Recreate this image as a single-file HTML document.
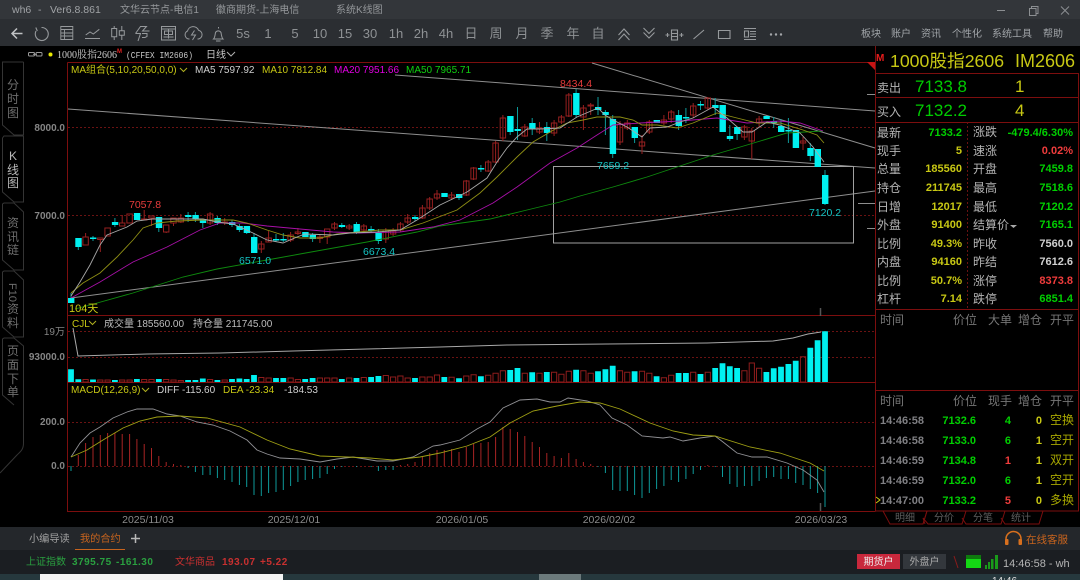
<!DOCTYPE html>
<html><head><meta charset="utf-8"><style>
html,body{margin:0;padding:0;background:#000;width:1080px;height:580px;overflow:hidden}
svg{display:block}
text{font-family:"Liberation Sans","Noto Sans CJK SC",sans-serif}
.l{font-size:12px;fill:#b4b4b4}
.v{font-size:11px;font-weight:bold;text-anchor:end}
.g{fill:#00d000}.y{fill:#c8c814}.w{fill:#d0d0d0}.r{fill:#f03c3c}
.h{font-size:12px;fill:#767676}
.t{font-size:11px;font-weight:bold;fill:#808084}
.o{font-size:12px;fill:#a8a800}
.a{font-size:10px;font-weight:bold;fill:#858585;text-anchor:end}
.d{font-size:10.5px;fill:#8c8c8c;text-anchor:middle}
.tb{font-size:13px;fill:#8e9194;text-anchor:middle}
.mn{font-size:10px;fill:#a0a4a8;text-anchor:middle}
.side{font-size:12px;fill:#6e6e6e;text-anchor:middle}
.n{font-size:10px}
.ab{font-size:10.5px}
.st{font-size:10px;font-weight:bold;letter-spacing:.5px}
</style></head><body>
<svg width="1080" height="580" viewBox="0 0 1080 580" xmlns="http://www.w3.org/2000/svg">
<rect width="1080" height="580" fill="#000"/>
<!-- title + toolbar -->
<rect width="1080" height="19" fill="#33363a"/>
<rect y="19" width="1080" height="27" fill="#2b2e32"/>
<text x="12" y="13" font-size="10.5" fill="#a0a3a6">wh6</text><text x="38" y="13" font-size="10.5" fill="#a0a3a6">-</text><text x="50" y="13" font-size="10.5" fill="#a0a3a6">Ver6.8.861</text>
<text x="120" y="13" font-size="10" fill="#95989b">文华云节点-电信1</text>
<text x="216" y="13" font-size="10" fill="#95989b">徽商期货-上海电信</text>
<text x="336" y="13" font-size="10" fill="#95989b">系统K线图</text>
<g stroke="#8c8f92" fill="none" stroke-width="1">
<path d="M997 10.5h8"/>
<path d="M1029.5 8.5h6.5v7h-6.5z M1031.5 8.5v-2h6.5v7h-2"/>
<path d="M1061 6.5l8 8M1069 6.5l-8 8"/>
</g>
<!-- toolbar icons -->
<g stroke="#96999c" fill="none" stroke-width="1">
<path d="M22.500 33.500H12M17 28.500l-5 5 5 5" stroke-width="1.500" stroke="#c0c2c4"/>
<path d="M41.500 27.500A6.500 6.500 0 1 1 36 31M35.800 27.500l1.500 3.500" stroke-width="1.100"/>
<path d="M60.800 26.500h12v13h-12zM60.800 29.500h12M64.500 29.500v10M60.800 33h12M60.800 36h12" stroke-width=".9"/>
<path d="M85 38.500h15M85.700 35l4.300-3 3.300 2 6-4.700"/>
<path d="M114.200 26v2.500M114.200 36.700v3.300M111.700 28.500h5v8.200h-5zM121.800 26v4.700M121.800 35.300v4.700M119.300 30.700h5v4.600h-5z"/>
<path d="M135.500 33.500l5-7h6l-4 4.500h7M135.500 33.500h5l-2.500 7.500M142 33.500h5v3l-2 1h-3" />
<path d="M161.500 26.500h14v13.500h-14zM161.500 29h14M164.500 31h8v3.500h-8zM168.500 29v9.500M163.500 37h10"/>
<path d="M189.500 39h-.5a4.200 4.200 0 0 1-1.500-8a5.800 5.800 0 0 1 11-.800a4.500 4.500 0 0 1 0 8.800h-1M194.500 30.500l-3 4.500h4l-3 5"/>
<path d="M213.500 39c1.500-1.500 1.500-4 2-6.500a3.200 3.200 0 0 1 5.500 0c.5 2.500.5 5 2 6.500zM216 41h4.500M218.500 27v1.500"/>
</g>
<text x="243" y="38" class="tb">5s</text><text x="268" y="38" class="tb">1</text><text x="295" y="38" class="tb">5</text><text x="320" y="38" class="tb">10</text><text x="345" y="38" class="tb">15</text><text x="370" y="38" class="tb">30</text><text x="396" y="38" class="tb">1h</text><text x="421" y="38" class="tb">2h</text><text x="446" y="38" class="tb">4h</text>
<text x="471" y="38" class="tb">日</text><text x="496" y="38" class="tb">周</text><text x="522" y="38" class="tb">月</text><text x="547" y="38" class="tb">季</text><text x="573" y="38" class="tb">年</text><text x="598" y="38" class="tb">自</text>
<g stroke="#96999c" fill="none" stroke-width="1.100">
<path d="M618.500 35l5.500-6 5.500 6M618.500 40l5.500-6 5.500 6"/>
<path d="M643.500 28l5.500 5.500 5.500-5.500M643.500 32.500l5.500 5.500 5.500-5.500"/>
<path d="M671.500 30h6v10h-6zM671.500 33.500h6M671.500 36.500h6M665.500 35h4M667.500 33v4M679.500 35h4M681.500 33v4"/>
<path d="M693.500 39l10.500-9"/>
<path d="M718.500 30.500h11.500v8h-11.500z"/>
<path d="M744 28.500h12M744 39.500h12M750 31.500h6M750 34h6M750 36.500h6M744.500 31h4v6h-4z"/>
</g>
<g fill="#a4a7aa"><circle cx="771" cy="34.500" r="1.200"/><circle cx="776" cy="34.500" r="1.200"/><circle cx="781" cy="34.500" r="1.200"/></g>
<text x="871" y="37" class="mn">板块</text><text x="901" y="37" class="mn">账户</text><text x="931" y="37" class="mn">资讯</text><text x="967" y="37" class="mn">个性化</text><text x="1012" y="37" class="mn">系统工具</text><text x="1053" y="37" class="mn">帮助</text>
<!-- second row -->
<g stroke="#9a9a9a" fill="none" stroke-width="1"><rect x="28.500" y="52.500" width="6" height="3.500" rx="1"/><rect x="36" y="52.500" width="6" height="3.500" rx="1"/><path d="M33 54.300h4"/></g>
<circle cx="50.500" cy="54.500" r="2" fill="#e8e800"/>
<text x="57" y="58" font-size="10" fill="#cfcfcf" style='font-family:"Liberation Serif","Noto Serif CJK SC",serif'>1000股指2606</text>
<text x="117" y="53" font-size="6" font-weight="bold" fill="#e02020">M</text>
<text x="126" y="58" font-size="9" fill="#c8c8c8" style='font-family:"Liberation Mono",monospace' textLength="67" lengthAdjust="spacingAndGlyphs">(CFFEX IM2606)</text>
<text x="206" y="58" font-size="10" fill="#c8c8c8">日线</text>
<path d="M227 52l4 4 4-4" stroke="#b0b0b0" fill="none"/>
<!-- frame -->
<g stroke="#7c0e0e" fill="none" stroke-width="1">
<path d="M67.500 62.500H875.500M875.500 46V511M67.500 62.500V511.500H875.500M68 315.500H875.500M68 382.500H875.500"/>
</g>
<g stroke="#6a1212" stroke-width="1" stroke-dasharray="2 2">
<path d="M68 127.500H875M68 215.500H875M68 331.500H875M68 357.500H875M68 422.500H875M68 466.500H875"/>
</g>
<path d="M867 62h8v8z" fill="#c81414"/>
<!-- side tabs -->
<g stroke="#343434" fill="none" stroke-width="1">
<path d="M23.500 62H2.500V125L14 135H23.500V62"/>
<path d="M23.500 136H4L2.500 138V192L14 202H23.500V136"/>
<path d="M14 203H4L2.500 204V260L14 270L23.500 270V212z"/>
<path d="M14 271H4L2.500 272V327L14 337H23.500V280z"/>
<path d="M14 338H4L2.500 339V395L14 405M14 338L23.500 346V443C23.500 450 20 452 17 455L0 473"/>
</g>
<text x="13" y="89" class="side">分</text><text x="13" y="103" class="side">时</text><text x="13" y="117" class="side">图</text>
<text x="13" y="160" class="side" style="fill:#b8b8b8">K</text><text x="13" y="174" class="side" style="fill:#b8b8b8">线</text><text x="13" y="187" class="side" style="fill:#b8b8b8">图</text>
<text x="13" y="227" class="side">资</text><text x="13" y="241" class="side">讯</text><text x="13" y="254" class="side">链</text>
<text transform="translate(9 283) rotate(90)" font-size="11" fill="#6e6e6e">F10</text><text x="13" y="313" class="side">资</text><text x="13" y="327" class="side">料</text>
<text x="13" y="355" class="side">页</text><text x="13" y="369" class="side">面</text><text x="13" y="383" class="side">下</text><text x="13" y="396" class="side">单</text>
<!-- axis labels -->
<text x="65" y="131" class="a">8000.0</text><text x="65" y="219" class="a">7000.0</text><text x="65" y="335" class="a" style="font-weight:normal">19万</text><text x="65" y="360" class="a">93000.0</text><text x="65" y="425" class="a">200.0</text><text x="65" y="469" class="a">0.0</text>
<!-- legends -->
<text x="71" y="73" class="n" fill="#c8c814">MA组合(5,10,20,50,0,0)</text><path d="M180 68l3.500 3.500 3.500-3.500" stroke="#b0b020" fill="none"/>
<text x="195" y="73" class="n" fill="#cfcfcf">MA5 7597.92</text>
<text x="262" y="73" class="n" fill="#c8c814">MA10 7812.84</text>
<text x="334" y="73" class="n" fill="#e000e0">MA20 7951.66</text>
<text x="406" y="73" class="n" fill="#10d010">MA50 7965.71</text>
<text x="72" y="327" class="n" fill="#c8c814">CJL</text><path d="M89 321l3.500 3.500 3.500-3.500" stroke="#b0b020" fill="none"/>
<text x="104" y="327" class="n" fill="#bdbdbd">成交量 185560.00</text><text x="193" y="327" class="n" fill="#bdbdbd">持仓量 211745.00</text>
<text x="71" y="393" class="n" fill="#c8c814">MACD(12,26,9)</text><path d="M142 388l3.500 3.500 3.500-3.500" stroke="#b0b020" fill="none"/>
<text x="157" y="393" class="n" fill="#cfcfcf">DIFF -115.60</text><text x="223" y="393" class="n" fill="#c8c814">DEA -23.34</text><text x="284" y="393" class="n" fill="#cfcfcf">-184.53</text>
<!-- trend lines -->
<g stroke="#8e8e8e" fill="none" stroke-width="1">
<path d="M68 109L875 168"/><path d="M395 75L875 111"/><path d="M592 63L875 148"/><path d="M71 298L875 191"/>
<rect x="553.500" y="166.500" width="300" height="76.500" stroke="#a0a0a0"/>
<path d="M867 94.500H875M858 203.500H875M867 228.500H875"/><path d="M820.500 308V316M820.500 503V511" stroke="#555" stroke-width="1.500"/>
</g>
<!-- red candle wicks -->
<path stroke="#9a2020" fill="none" d="M85.600 233V237M100.300 239V252M122.200 215V223M144.200 210V220M151.500 218V226M166.200 232V233M173.500 223V226M180.800 214V218M180.800 222V223M210.100 212V225M224.700 218V225M261.300 241V253M268.600 231V242M290.600 232V242M297.900 228V235M319.900 235V243M327.200 237V244M334.500 222V230M349.200 224V230M363.800 224V233M385.800 228V243M393.100 228V236M400.400 222V232M407.700 214V224M422.400 205V219M429.700 197V210M437 190V200M451.600 192V200M466.300 180V196M473.600 167V180M488.200 160V172M495.600 141V163M502.900 115V141M524.800 124V137M539.500 122V134M554.100 120V136M561.400 115V124M568.800 93V117M583.400 105V130M590.700 103V115M620 121V145M627.300 120V130M642 135V154M649.300 120V134M663.900 115V125M671.200 110V123M693.200 103V118M707.800 97V110M744.400 125V140M751.800 128V159M759.100 116V127M803 137V150"/>
<!-- red candle bodies -->
<path stroke="#962020" fill="none" d="M82.900 237h5.400V245h-5.400zM97.600 238h5.400V239.500h-5.400zM104.900 228h5.400V236h-5.400zM119.500 223h5.400V226h-5.400zM126.900 214h5.400V223h-5.400zM141.500 219h5.400V220h-5.400zM148.800 216h5.400V218h-5.400zM163.500 225h5.400V232h-5.400zM170.800 218h5.400V223h-5.400zM178.100 218h5.400V222h-5.400zM207.400 214h5.400V223h-5.400zM222 222h5.400V223h-5.400zM258.600 244h5.400V249h-5.400zM265.900 238h5.400V242h-5.400zM287.900 235h5.400V240h-5.400zM295.200 232h5.400V233.500h-5.400zM317.200 237h5.400V238.500h-5.400zM324.500 229h5.400V237h-5.400zM331.800 224h5.400V228h-5.400zM346.500 226h5.400V228h-5.400zM361.100 226h5.400V230h-5.400zM383.100 230h5.400V239h-5.400zM390.400 231h5.400V234h-5.400zM397.700 224h5.400V230h-5.400zM405 218h5.400V222h-5.400zM419.700 208h5.400V218h-5.400zM427 199h5.400V208h-5.400zM434.300 194h5.400V198h-5.400zM448.900 195h5.400V198h-5.400zM463.600 181h5.400V195h-5.400zM470.900 168h5.400V179h-5.400zM485.500 162h5.400V171h-5.400zM492.900 143h5.400V162h-5.400zM500.200 118h5.400V138h-5.400zM522.100 127h5.400V136h-5.400zM536.800 128h5.400V132h-5.400zM551.400 123h5.400V133h-5.400zM558.700 117h5.400V122h-5.400zM566.100 95h5.400V116h-5.400zM580.700 108h5.400V117h-5.400zM588 105h5.400V106h-5.400zM617.300 124h5.400V142h-5.400zM624.600 123h5.400V128h-5.400zM639.300 142h5.400V146h-5.400zM646.600 122h5.400V132h-5.400zM661.200 120h5.400V123h-5.400zM668.500 112h5.400V119h-5.400zM690.500 106h5.400V115h-5.400zM705.100 98h5.400V108h-5.400zM741.700 127h5.400V137h-5.400zM749.100 131h5.400V141h-5.400zM756.400 119h5.400V123h-5.400zM800.300 141h5.400V143h-5.400z"/>
<!-- cyan wicks -->
<path stroke="#0d9a9a" fill="none" d="M71 293V298M78.300 247V250M93 236V241M114.900 218V227M158.800 228V232M188.100 212V222M195.400 212V222M202.800 223V228M217.400 216V225M232 220V227M239.400 224V232M246.700 226V234M254 233V237M276 234V242M283.300 233V242M312.600 233V242M341.800 223V228M356.500 222V234M371.100 226V232M378.400 229V244M415 215V221M459 198V200M480.900 165V172M510.200 132V135M517.500 107V140M532.200 118V135M546.800 122V141M576.100 89V118M598 97V115M605.400 110V135M612.700 115V158M634.600 138V143M678.600 110V130M685.900 108V123M700.500 101V110M715.200 98V115M729.800 125V141M737.100 134V140M773.700 117V128M781 119V126M788.400 118V143M810.300 143V161M825 170V205"/>
<!-- cyan bodies -->
<path fill="#00f0f0" d="M68 298h6.400V303h-6.400zM75.300 238h6.400V247h-6.400zM90 237.500h6.400V239h-6.400zM111.900 222h6.400V225h-6.400zM133.900 213h6.400V220h-6.400zM155.800 217h6.400V228h-6.400zM185.100 215h6.400V217h-6.400zM192.400 215h6.400V219h-6.400zM199.800 219h6.400V223h-6.400zM214.400 218h6.400V223h-6.400zM229 222h6.400V225h-6.400zM236.400 226h6.400V230h-6.400zM243.700 226h6.400V233h-6.400zM251 237h6.400V253h-6.400zM273 239h6.400V240.500h-6.400zM280.300 239h6.400V240.500h-6.400zM302.200 232h6.400V237h-6.400zM309.600 235h6.400V239h-6.400zM338.800 225h6.400V227h-6.400zM353.500 224h6.400V232h-6.400zM368.100 229h6.400V231h-6.400zM375.400 232h6.400V241h-6.400zM412 217h6.400V219h-6.400zM441.300 193h6.400V197h-6.400zM456 194h6.400V198h-6.400zM477.900 168h6.400V169.500h-6.400zM507.200 116h6.400V132h-6.400zM514.500 129h6.400V131h-6.400zM529.200 123h6.400V129h-6.400zM543.800 127h6.400V133h-6.400zM573.100 93h6.400V115h-6.400zM595 107h6.400V110h-6.400zM602.400 112h6.400V115h-6.400zM609.700 119h6.400V154h-6.400zM631.600 127h6.400V138h-6.400zM653.600 120h6.400V123h-6.400zM675.600 115h6.400V126h-6.400zM682.900 117h6.400V118.500h-6.400zM697.500 104h6.400V105.500h-6.400zM712.200 105h6.400V108h-6.400zM719.500 105h6.400V132h-6.400zM726.800 136h6.400V139h-6.400zM734.100 127h6.400V134h-6.400zM763.400 116h6.400V119h-6.400zM770.700 121h6.400V122.500h-6.400zM778 126h6.400V132h-6.400zM785.400 130h6.400V131.500h-6.400zM792.700 130h6.400V148h-6.400zM807.300 148h6.400V156h-6.400zM814.600 149h6.400V167h-6.400zM822 175h6.400V204h-6.400z"/>
<!-- MA lines -->
<g fill="none" stroke-width=".9">
<polyline stroke="#0e8a0e" points="75,309 90,305 133,293 183,277 217,269 267,260 300,254 367,242 417,232 440,226 490,219 527,210 560,202 580,196 613,187 647,177 680,166 713,155 747,145 787,133 823,131"/>
<polyline stroke="#a810a8" points="71,298 100,282 133,262 167,247 200,230 220,223 243,223 267,226 300,229 333,232 360,233 400,232 433,227 460,220 493,203 517,187 550,163 577,148 597,135 613,125 640,123 680,121 717,118 747,123 780,121 800,123 823,131"/>
<polyline stroke="#8e8e14" points="71,293 83,283 100,273 117,257 133,240 143,228 157,223 177,221 203,220 233,220 247,223 267,230 283,235 300,238 320,238 337,234 380,230 400,230 423,223 457,210 480,193 497,177 517,157 533,142 557,128 567,123 583,120 597,117 620,117 633,120 642,125 657,125 677,128 693,123 717,113 737,118 757,123 780,123 803,130 817,135 824,143"/>
<polyline stroke="#a8a8a8" points="71,296 80,282 90,265 100,245 107,235 127,227 137,221 152,219 167,219 187,219 203,219 217,222 233,224 253,233 267,240 283,243 297,237 305,234 333,235 350,233 377,232 400,230 417,220 440,205 467,192 487,178 497,162 507,148 517,137 527,129 540,129 560,128 577,117 598,108 605,115 613,120 627,127 642,137 650,128 667,127 680,122 693,118 713,107 727,118 743,132 752,132 767,122 780,125 800,133 813,147 824,162"/>
</g>
<!-- annotations -->
<text x="129" y="208" class="ab" fill="#e83c3c">7057.8</text><text x="239" y="264" class="ab" fill="#14c4c4">6571.0</text><text x="363" y="255" class="ab" fill="#14c4c4">6673.4</text><text x="560" y="87" class="ab" fill="#e83c3c">8434.4</text><text x="597" y="169" class="ab" fill="#14c4c4">7659.2</text><text x="809" y="216" class="ab" fill="#14c4c4">7120.2</text>
<text x="69" y="312" font-size="11" fill="#c8c814">104天</text>
<!-- volume -->
<path fill="#00f0f0" d="M68.100 369.300h5.800V382h-5.800zM75.400 379.300h5.800V382h-5.800zM90.100 379.500h5.800V382h-5.800zM112 380h5.800V382h-5.800zM134 379h5.800V382h-5.800zM155.900 379h5.800V382h-5.800zM185.200 380h5.800V382h-5.800zM192.500 380h5.800V382h-5.800zM199.900 378.500h5.800V382h-5.800zM214.500 380h5.800V382h-5.800zM229.100 379h5.800V382h-5.800zM236.500 378.500h5.800V382h-5.800zM243.800 379h5.800V382h-5.800zM251.100 375h5.800V382h-5.800zM273.100 378h5.800V382h-5.800zM280.400 378h5.800V382h-5.800zM302.300 379h5.800V382h-5.800zM309.700 378h5.800V382h-5.800zM338.900 379h5.800V382h-5.800zM353.600 378h5.800V382h-5.800zM368.200 377h5.800V382h-5.800zM375.500 376h5.800V382h-5.800zM412.100 378h5.800V382h-5.800zM441.400 377h5.800V382h-5.800zM456.100 378.300h5.800V382h-5.800zM478 376.300h5.800V382h-5.800zM507.300 370h5.800V382h-5.800zM514.600 368h5.800V382h-5.800zM529.300 372.300h5.800V382h-5.800zM543.900 372h5.800V382h-5.800zM573.200 369.700h5.800V382h-5.800zM595.100 371.300h5.800V382h-5.800zM602.500 369.300h5.800V382h-5.800zM609.800 365.700h5.800V382h-5.800zM631.700 371.300h5.800V382h-5.800zM653.700 376.300h5.800V382h-5.800zM675.700 373h5.800V382h-5.800zM683 373h5.800V382h-5.800zM697.600 374h5.800V382h-5.800zM712.300 368h5.800V382h-5.800zM719.600 363.300h5.800V382h-5.800zM726.900 366.300h5.800V382h-5.800zM734.200 368h5.800V382h-5.800zM763.500 372h5.800V382h-5.800zM770.800 368.300h5.800V382h-5.800zM778.100 366.700h5.800V382h-5.800zM785.500 364h5.800V382h-5.800zM792.800 360.700h5.800V382h-5.800zM807.400 347.700h5.800V382h-5.800zM814.700 340.300h5.800V382h-5.800zM822.100 331.300h5.800V382h-5.800z"/>
<path stroke="#8e1c1c" fill="none" d="M83 379.500h5.200V382h-5.200zM97.700 380h5.200V382h-5.200zM105 380h5.200V382h-5.200zM119.600 380h5.200V382h-5.200zM127 380h5.200V382h-5.200zM141.600 379.500h5.200V382h-5.200zM148.900 379.500h5.200V382h-5.200zM163.600 379.500h5.200V382h-5.200zM170.900 380h5.200V382h-5.200zM178.200 380.500h5.200V382h-5.200zM207.500 379.500h5.200V382h-5.200zM222.100 380h5.200V382h-5.200zM258.700 377.500h5.200V382h-5.200zM266 378h5.200V382h-5.200zM288 378h5.200V382h-5.200zM295.300 379.500h5.200V382h-5.200zM317.300 378h5.200V382h-5.200zM324.600 378h5.200V382h-5.200zM331.900 378h5.200V382h-5.200zM346.600 378h5.200V382h-5.200zM361.200 377.500h5.200V382h-5.200zM383.200 375.500h5.200V382h-5.200zM390.500 377h5.200V382h-5.200zM397.800 376h5.200V382h-5.200zM405.100 378h5.200V382h-5.200zM419.800 377h5.200V382h-5.200zM427.100 377h5.200V382h-5.200zM434.400 375h5.200V382h-5.200zM449 377.300h5.200V382h-5.200zM463.700 376h5.200V382h-5.200zM471 374.700h5.200V382h-5.200zM485.600 375.300h5.200V382h-5.200zM493 373.300h5.200V382h-5.200zM500.300 370.700h5.200V382h-5.200zM522.200 373.300h5.200V382h-5.200zM536.900 373.300h5.200V382h-5.200zM551.500 372.300h5.200V382h-5.200zM558.800 374.300h5.200V382h-5.200zM566.200 371.300h5.200V382h-5.200zM580.800 370.700h5.200V382h-5.200zM588.100 373.300h5.200V382h-5.200zM617.400 370.700h5.200V382h-5.200zM624.700 372.300h5.200V382h-5.200zM639.400 371.300h5.200V382h-5.200zM646.700 373.300h5.200V382h-5.200zM661.300 377.700h5.200V382h-5.200zM668.600 375.300h5.200V382h-5.200zM690.600 372.300h5.200V382h-5.200zM705.200 372.300h5.200V382h-5.200zM741.800 370.700h5.200V382h-5.200zM749.200 363h5.200V382h-5.200zM756.500 368.300h5.200V382h-5.200zM800.400 356.700h5.200V382h-5.200z"/>
<polyline fill="none" stroke="#a8a8a8" points="73,328 78,356 147,354 220,353 293,351 367,349 440,347 507,345 607,344 707,343 773,341 793,338 808,334 821,332"/>
<!-- MACD histogram -->
<path stroke="#a82424" fill="none" d="M78.300 466V455M85.600 466V443M93 466V437M100.300 466V435M107.600 466V433M114.900 466V433M122.200 466V434M129.600 466V434M136.900 466V439M144.200 466V444M151.500 466V448M158.800 466V456M166.200 466V462M173.500 466V464M180.800 466V465M400.400 466V465M407.700 466V464M415 466V462M422.400 466V457M429.700 466V453M437 466V450M444.300 466V450M451.600 466V449M459 466V452M466.300 466V447M473.600 466V444M480.900 466V443M488.200 466V442M495.600 466V437M502.900 466V427M510.200 466V429M517.500 466V432M524.800 466V436M532.200 466V442M539.500 466V447M546.800 466V453M554.100 466V456M561.400 466V458M568.800 466V453M576.100 466V459M583.400 466V462M590.700 466V464M707.800 466V465"/>
<path stroke="#0e9a9a" fill="none" d="M71 466V471M188.100 466V468M195.400 466V472M202.800 466V475M210.100 466V475M217.400 466V478M224.700 466V480M232 466V482M239.400 466V485M246.700 466V487M254 466V495M261.300 466V496M268.600 466V493M276 466V492M283.300 466V490M290.600 466V486M297.900 466V482M305.200 466V480M312.600 466V479M319.900 466V478M327.200 466V474M334.500 466V469M341.800 466V467M356.500 466V467M371.100 466V467M378.400 466V471M385.800 466V470M393.100 466V470M598 466V467M605.400 466V473M612.700 466V490M620 466V491M627.300 466V491M634.600 466V495M642 466V498M649.300 466V493M656.600 466V489M663.900 466V486M671.200 466V480M678.600 466V482M685.900 466V479M693.200 466V474M700.500 466V470M715.200 466V467M722.500 466V477M729.800 466V484M737.100 466V487M744.400 466V486M751.800 466V486M759.100 466V481M766.400 466V478M773.700 466V477M781 466V479M788.400 466V479M795.700 466V483M803 466V485M810.300 466V489M817.600 466V493M825 466V507"/>
<polyline fill="none" stroke="#909094" stroke-width=".9" points="71,457 80,443 90,433 100,427 113,418 127,412 137,409 153,409 167,414 180,416 197,422 213,425 230,431 247,440 257,450 267,454 280,458 300,459 320,462 337,459 353,457 377,461 393,461 413,457 433,446 440,445 460,440 477,429 490,422 503,408 520,400 537,399 550,402 560,402 568,398 587,401 600,405 612,418 627,425 642,436 663,438 670,437 683,441 700,438 715,436 723,442 737,453 752,457 767,457 787,463 803,470 817,480 824,492"/>
<polyline fill="none" stroke="#a0a014" stroke-width=".9" points="71,457 87,450 103,440 123,428 140,421 157,417 180,416 207,418 240,427 267,440 290,449 320,456 347,457 370,458 393,460 420,457 440,453 467,446 490,437 510,423 533,411 557,406 580,402 600,403 620,409 650,423 673,431 693,435 715,436 750,447 780,453 810,463 824,471"/>
<!-- dates -->
<text x="148" y="523" class="d">2025/11/03</text><text x="294" y="523" class="d">2025/12/01</text><text x="462" y="523" class="d">2026/01/05</text><text x="609" y="523" class="d">2026/02/02</text><text x="821" y="523" class="d">2026/03/23</text>
<!-- right panel -->
<text x="876" y="61" font-size="10" font-weight="bold" fill="#e81c1c">M</text>
<text x="890" y="67" font-size="17.700" fill="#c8c814">1000股指2606</text><text x="1015" y="67" font-size="18" fill="#c8c814">IM2606</text>
<g stroke="#7c0e0e" fill="none"><path d="M875.500 73.500H1078.500V511H875.500M875.500 97.500H1078.500M875.500 122.500H1078.500M875.500 309.500H1078.500M875.500 390.500H1078.500"/><path d="M967.500 122V309" stroke-dasharray="2 2" stroke="#6a1212"/></g>
<text x="877" y="92" class="l">卖出</text><text x="877" y="116" class="l">买入</text>
<text x="915" y="92" font-size="17" fill="#00cc00">7133.8</text><text x="915" y="116" font-size="17" fill="#00cc00">7132.2</text>
<text x="1015" y="92" font-size="17" fill="#c8c814">1</text><text x="1015" y="116" font-size="17" fill="#c8c814">4</text>
<text x="877" y="137" class="l">最新</text><text x="962" y="136" class="v g">7133.2</text><text x="973" y="136" class="l">涨跌</text><text x="1073" y="136" class="v g">-479.4/6.30%</text>
<text x="877" y="155" class="l">现手</text><text x="962" y="154" class="v y">5</text><text x="973" y="155" class="l">速涨</text><text x="1073" y="154" class="v r">0.02%</text>
<text x="877" y="173" class="l">总量</text><text x="962" y="172" class="v y">185560</text><text x="973" y="173" class="l">开盘</text><text x="1073" y="172" class="v g">7459.8</text>
<text x="877" y="192" class="l">持仓</text><text x="962" y="191" class="v y">211745</text><text x="973" y="192" class="l">最高</text><text x="1073" y="191" class="v g">7518.6</text>
<text x="877" y="211" class="l">日增</text><text x="962" y="210" class="v y">12017</text><text x="973" y="211" class="l">最低</text><text x="1073" y="210" class="v g">7120.2</text>
<text x="877" y="229" class="l">外盘</text><text x="962" y="228" class="v y">91400</text><text x="973" y="229" class="l">结算价</text><path d="M1010 225h7l-3.500 3z" fill="#a8a8a8"/><text x="1073" y="228" class="v g">7165.1</text>
<text x="877" y="248" class="l">比例</text><text x="962" y="247" class="v y">49.3%</text><text x="973" y="248" class="l">昨收</text><text x="1073" y="247" class="v w">7560.0</text>
<text x="877" y="266" class="l">内盘</text><text x="962" y="265" class="v y">94160</text><text x="973" y="266" class="l">昨结</text><text x="1073" y="265" class="v w">7612.6</text>
<text x="877" y="285" class="l">比例</text><text x="962" y="284" class="v y">50.7%</text><text x="973" y="285" class="l">涨停</text><text x="1073" y="284" class="v r">8373.8</text>
<text x="877" y="303" class="l">杠杆</text><text x="962" y="302" class="v y">7.14</text><text x="973" y="303" class="l">跌停</text><text x="1073" y="302" class="v g">6851.4</text>
<!-- tables -->
<text x="880" y="324" class="h">时间</text><text x="953" y="324" class="h">价位</text><text x="988" y="324" class="h">大单</text><text x="1018" y="324" class="h">增仓</text><text x="1050" y="324" class="h">开平</text>
<text x="880" y="405" class="h">时间</text><text x="953" y="405" class="h">价位</text><text x="988" y="405" class="h">现手</text><text x="1018" y="405" class="h">增仓</text><text x="1050" y="405" class="h">开平</text>
<text x="880" y="424" class="t">14:46:58</text><text x="976" y="424" class="v g">7132.6</text><text x="1011" y="424" class="v g">4</text><text x="1042" y="424" class="v y">0</text><text x="1050" y="424" class="o">空换</text>
<text x="880" y="444" class="t">14:46:58</text><text x="976" y="444" class="v g">7133.0</text><text x="1011" y="444" class="v g">6</text><text x="1042" y="444" class="v y">1</text><text x="1050" y="444" class="o">空开</text>
<text x="880" y="464" class="t">14:46:59</text><text x="976" y="464" class="v g">7134.8</text><text x="1011" y="464" class="v r">1</text><text x="1042" y="464" class="v y">1</text><text x="1050" y="464" class="o">双开</text>
<text x="880" y="484" class="t">14:46:59</text><text x="976" y="484" class="v g">7132.0</text><text x="1011" y="484" class="v g">6</text><text x="1042" y="484" class="v y">1</text><text x="1050" y="484" class="o">空开</text>
<path d="M876 497l4 3-4 3" stroke="#c8c814" fill="none"/>
<text x="880" y="504" class="t">14:47:00</text><text x="976" y="504" class="v g">7133.2</text><text x="1011" y="504" class="v r">5</text><text x="1042" y="504" class="v y">0</text><text x="1050" y="504" class="o">多换</text>
<!-- bottom panel tabs -->
<g stroke="#7c0e0e" fill="none"><path d="M883 511L890 524H923L927 511"/><path d="M927 511L923 524M925 524L923 518L928 524H962L966 511"/><path d="M962 518L966 524H1001L1005 511"/><path d="M1001 518L1005 524H1039L1043 511"/></g>
<text x="905" y="521" text-anchor="middle" font-size="10" fill="#5e5e5e">明细</text><text x="944" y="521" text-anchor="middle" font-size="10" fill="#5e5e5e">分价</text><text x="983" y="521" text-anchor="middle" font-size="10" fill="#5e5e5e">分笔</text><text x="1021" y="521" text-anchor="middle" font-size="10" fill="#5e5e5e">统计</text>
<!-- bottom bars -->
<rect y="527" width="1080" height="23" fill="#24272b"/>
<rect y="550" width="1080" height="24" fill="#1b1e22"/>
<rect y="574" width="1080" height="6" fill="#26383d"/>
<rect x="40" y="574" width="243" height="6" fill="#f4f4f4"/>
<rect x="539" y="574" width="42" height="6" fill="#6c7a7c"/>
<text x="29" y="542" font-size="10.200" fill="#a4a4a4">小编导读</text><text x="80" y="542" font-size="10.200" fill="#c8641e">我的合约</text>
<rect x="75" y="549" width="50" height="1" fill="#c8641e"/>
<path d="M131 538.500h9M135.500 534v9" stroke="#b8b8b8" stroke-width="1.500"/>
<text x="26" y="565" font-size="10" fill="#2aa040">上证指数</text>
<text x="72" y="565" class="st" fill="#2aa040">3795.75</text><text x="116" y="565" class="st" fill="#2aa040">-161.30</text>
<text x="175" y="565" font-size="10" fill="#c83030">文华商品</text>
<text x="222" y="565" class="st" fill="#c83030">193.07</text><text x="260" y="565" class="st" fill="#c83030">+5.22</text>
<path d="M1006 544v-5a7.500 7.500 0 0 1 15 0v5" stroke="#d8701e" fill="none" stroke-width="1.500"/><rect x="1005" y="539" width="3.500" height="6" rx="1" fill="#d8701e"/><rect x="1018.500" y="539" width="3.500" height="6" rx="1" fill="#d8701e"/>
<text x="1026" y="543" font-size="10.500" fill="#c8641e">在线客服</text>
<rect x="857" y="554" width="43" height="15" fill="#c8283c"/><text x="878.500" y="565" text-anchor="middle" font-size="10" fill="#eee">期货户</text>
<rect x="903" y="554" width="43" height="15" fill="#33373c"/><text x="924.500" y="565" text-anchor="middle" font-size="10" fill="#aaa">外盘户</text>
<path d="M954 556l4 12" stroke="#8a1c1c"/>
<rect x="966" y="555" width="15" height="13" fill="#14d814"/><rect x="966" y="555" width="15" height="4" fill="#0e7a0e"/>
<g fill="#1a9a1a"><rect x="985" y="565" width="2" height="4"/><rect x="988" y="562" width="2" height="7"/><rect x="991" y="559" width="2.500" height="10"/><rect x="995" y="555" width="3" height="14"/></g>
<text x="1003" y="567" font-size="11" fill="#b4b4b4">14:46:58 - wh</text>
<text x="992" y="584" font-size="10" fill="#e0e0e0">14:46</text>
</svg>
</body></html>
